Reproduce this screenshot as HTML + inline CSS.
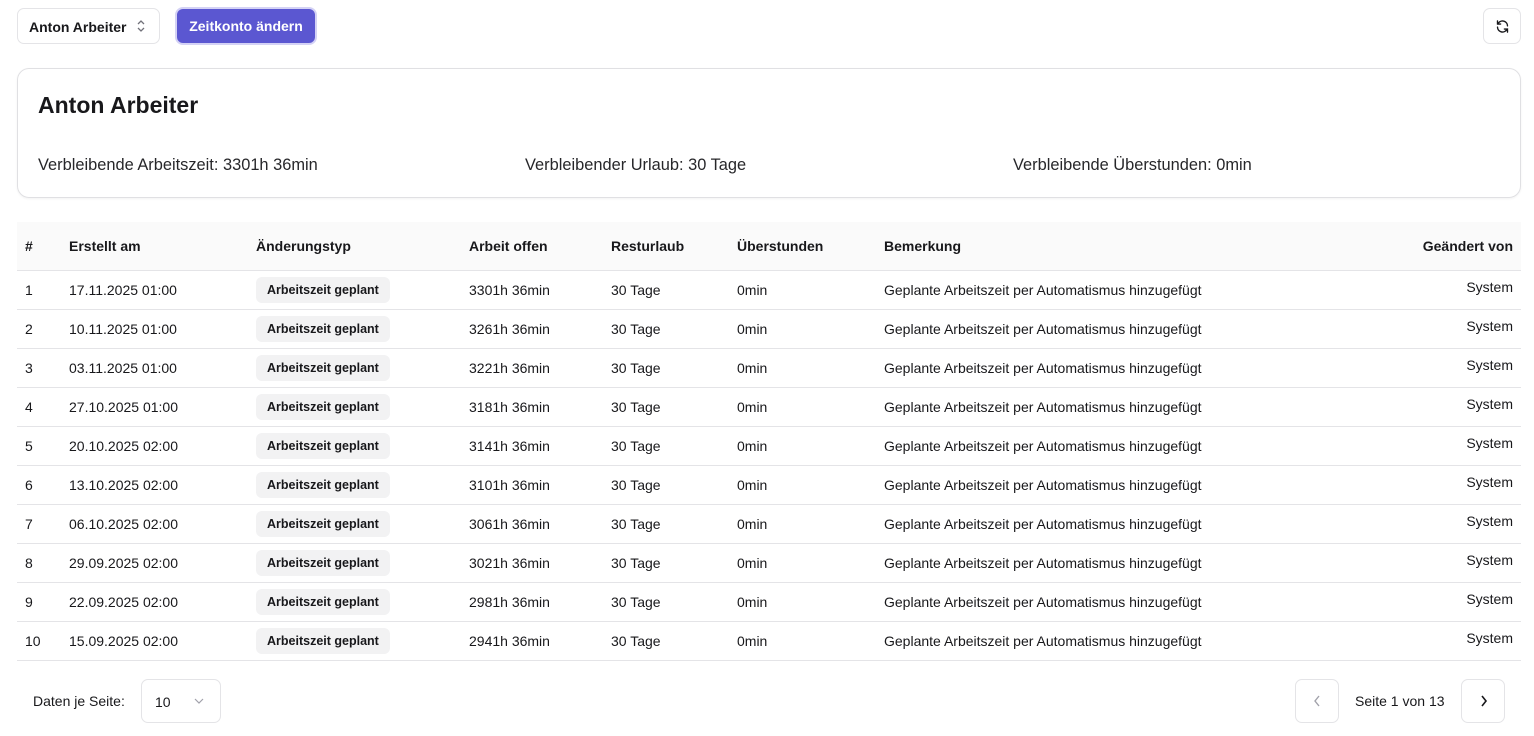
<!DOCTYPE html>
<html><head><meta charset="utf-8"><style>
*{box-sizing:border-box;margin:0;padding:0}
body{width:1534px;height:736px;background:#fff;font-family:"Liberation Sans",Arial,sans-serif;color:#18181b;position:relative;overflow:hidden}
.abs{position:absolute}
.sel{left:17px;top:8px;width:143px;height:36px;border:1px solid #e4e4e7;border-radius:7px;font-size:14px;font-weight:bold;padding:10px 0 0 11px}
.btn{left:175px;top:7px;width:142px;height:38px;background:#5b57d1;border:2px solid #d4d2f5;border-radius:8px;color:#fff;font-size:14px;font-weight:bold;text-align:center;line-height:34px}
.ref{left:1483px;top:8px;width:38px;height:36px;border:1px solid #e4e4e7;border-radius:7px}
.card{left:17px;top:68px;width:1504px;height:130px;border:1px solid #e0e0e3;border-radius:12px;box-shadow:0 1px 2px rgba(0,0,0,.05)}
.card h1{position:absolute;left:20px;top:23px;font-size:23px;font-weight:bold}
.card span{position:absolute;top:87px;font-size:16.4px;color:#27272a}
.thead{left:17px;top:222px;width:1504px;height:49px;background:#fafafa;border-bottom:1px solid #e4e4e7}
.row{left:17px;width:1504px;height:39px;border-bottom:1px solid #e4e4e7}
.c{position:absolute;font-size:14px;white-space:nowrap}
.thead .c{top:16px;font-weight:bold}
.row .c{top:11px}
.badge{position:absolute;left:239px;top:6px;height:26px;padding:0 11px;background:#f2f2f3;border-radius:6px;font-size:12.5px;font-weight:bold;line-height:26px}
.pg{width:44px;height:44px;border:1px solid #e4e4e7;border-radius:7px;top:679px}
</style></head><body>
<div class="abs sel">Anton Arbeiter<svg class="abs" style="left:118px;top:10px" width="10" height="14" viewBox="0 0 10 14"><path d="M2 5l3-3 3 3M2 9l3 3 3-3" fill="none" stroke="#71717a" stroke-width="1.3"/></svg></div>
<div class="abs btn">Zeitkonto ändern</div>
<div class="abs ref"><svg class="abs" style="left:11px;top:10px" width="15" height="15" viewBox="0 0 24 24" fill="none" stroke="#18181b" stroke-width="2.2" stroke-linecap="round"><path d="M20 11a8 8 0 0 0-14.5-4.5L4 8M4 3v5h5"/><path d="M4 13a8 8 0 0 0 14.5 4.5L20 16M20 21v-5h-5"/></svg></div>
<div class="abs card"><h1>Anton Arbeiter</h1>
<span style="left:20px">Verbleibende Arbeitszeit: 3301h 36min</span>
<span style="left:507px">Verbleibender Urlaub: 30 Tage</span>
<span style="left:995px">Verbleibende Überstunden: 0min</span></div>
<div class="abs thead"><span class="c" style="left:8px">#</span><span class="c" style="left:52px">Erstellt am</span><span class="c" style="left:239px">Änderungstyp</span><span class="c" style="left:452px">Arbeit offen</span><span class="c" style="left:594px">Resturlaub</span><span class="c" style="left:720px">Überstunden</span><span class="c" style="left:867px">Bemerkung</span><span class="c" style="right:8px">Geändert von</span></div>
<div id="rows"></div>
<span class="abs" style="left:33px;top:693px;font-size:14px">Daten je Seite:</span>
<div class="abs" style="left:141px;top:679px;width:80px;height:44px;border:1px solid #e4e4e7;border-radius:7px;font-size:14px;padding:14px 0 0 13px">10<svg class="abs" style="left:52px;top:18px" width="10" height="7" viewBox="0 0 10 7"><path d="M1 1l4 4 4-4" fill="none" stroke="#a1a1aa" stroke-width="1.2"/></svg></div>
<div class="abs pg" style="left:1295px"><svg class="abs" style="left:17px;top:15px" width="8" height="12" viewBox="0 0 8 12"><path d="M6 1L2 6l4 5" fill="none" stroke="#a1a1aa" stroke-width="1.4"/></svg></div>
<span class="abs" style="left:1355px;top:693px;font-size:14px">Seite 1 von 13</span>
<div class="abs pg" style="left:1461px"><svg class="abs" style="left:18px;top:15px" width="8" height="12" viewBox="0 0 8 12"><path d="M2 1l4 5-4 5" fill="none" stroke="#18181b" stroke-width="1.6"/></svg></div>
<script>
var d=["17.11.2025 01:00","10.11.2025 01:00","03.11.2025 01:00","27.10.2025 01:00","20.10.2025 02:00","13.10.2025 02:00","06.10.2025 02:00","29.09.2025 02:00","22.09.2025 02:00","15.09.2025 02:00"];
var h="";for(var i=0;i<10;i++){h+='<div class="abs row" style="top:'+(271+39*i)+'px"><span class="c" style="left:8px">'+(i+1)+'</span><span class="c" style="left:52px">'+d[i]+'</span><span class="badge">Arbeitszeit geplant</span><span class="c" style="left:452px">'+(3301-40*i)+'h 36min</span><span class="c" style="left:594px">30 Tage</span><span class="c" style="left:720px">0min</span><span class="c" style="left:867px">Geplante Arbeitszeit per Automatismus hinzugefügt</span><span class="c" style="right:8px;top:8px">System</span></div>';}
document.getElementById("rows").outerHTML=h;
</script>
</body></html>
